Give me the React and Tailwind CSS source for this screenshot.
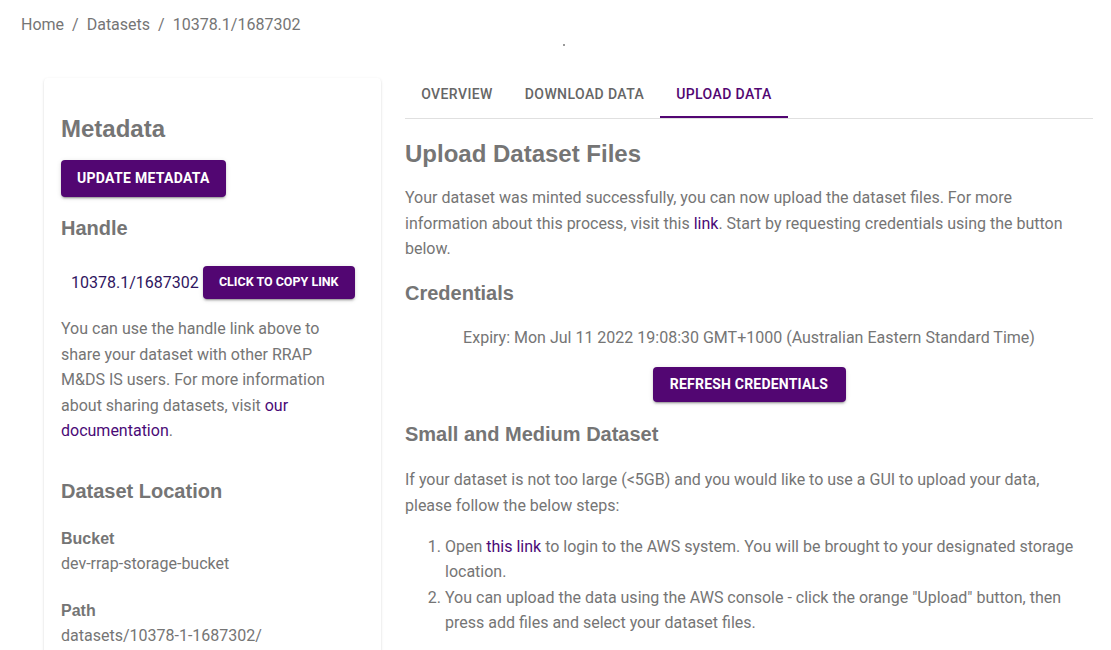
import React from "react";

const btnShadow =
  "shadow-[0_3px_1px_-2px_rgba(0,0,0,0.2),0_2px_2px_0_rgba(0,0,0,0.14),0_1px_5px_0_rgba(0,0,0,0.12)]";

function Tabs() {
  return (
    <div className="flex h-[49px] border-b border-[#e0e0e0] font-['Roboto',sans-serif] text-[14px] font-medium uppercase tracking-[0.4px]">
      <div className="flex h-[48px] w-[104px] items-center justify-center text-[#666666]">Overview</div>
      <div className="flex h-[48px] w-[151px] items-center justify-center text-[#666666]">Download Data</div>
      <div className="flex h-[48px] w-[128px] items-center justify-center border-b-2 border-[#520672] pt-[2px] text-[#520672]">
        Upload Data
      </div>
    </div>
  );
}

function MetadataCard() {
  return (
    <div className="mt-[8px] w-[337px] shrink-0 rounded-[4px] bg-white px-[17px] pt-[36px] pb-[40px] shadow-[0_2px_1px_-1px_rgba(0,0,0,0.2),0_1px_1px_0_rgba(0,0,0,0.14),0_1px_3px_0_rgba(0,0,0,0.12)]">
      <h2 className="font-['Liberation_Sans',Arial,sans-serif] text-[24px] leading-[29px] font-bold text-[#757575]">Metadata</h2>
      <button
        className={`mt-[17px] h-[37px] rounded-[4px] bg-[#520672] px-[16px] font-['Roboto',sans-serif] text-[14px] font-bold uppercase tracking-[0.3px] text-white ${btnShadow}`}
      >
        Update Metadata
      </button>
      <h3 className="mt-[19px] font-['Liberation_Sans',Arial,sans-serif] text-[20px] leading-[24px] font-bold text-[#757575]">Handle</h3>
      <div className="mt-[26px] flex items-center gap-[4px] pl-[10px]">
        <span className="font-['Roboto',sans-serif] text-[16px] text-[#2f1660]">10378.1/1687302</span>
        <button
          className={`h-[33px] w-[152px] rounded-[4px] bg-[#520672] font-['Roboto',sans-serif] text-[12.5px] font-bold uppercase text-white ${btnShadow}`}
        >
          Click to copy link
        </button>
      </div>
      <p className="mt-[17px] pr-[8px] font-['Roboto',sans-serif] text-[16px] leading-[25.6px] text-[#757575]">
        You can use the handle link above to share your dataset with other RRAP M&amp;DS IS users. For more information about
        sharing datasets, visit <span className="text-[#4a0a77]">our documentation</span>.
      </p>
      <h3 className="mt-[35px] font-['Liberation_Sans',Arial,sans-serif] text-[20px] leading-[24px] font-bold text-[#757575]">
        Dataset Location
      </h3>
      <div className="mt-[24px] font-['Liberation_Sans',Arial,sans-serif] text-[16px] leading-[24px] font-bold text-[#757575]">Bucket</div>
      <div className="font-['Roboto',sans-serif] text-[16px] leading-[25.6px] text-[#757575]">dev-rrap-storage-bucket</div>
      <div className="mt-[22px] font-['Liberation_Sans',Arial,sans-serif] text-[16px] leading-[24px] font-bold text-[#757575]">Path</div>
      <div className="font-['Roboto',sans-serif] text-[16px] leading-[25.6px] text-[#757575]">datasets/10378-1-1687302/</div>
    </div>
  );
}

function UploadPanel() {
  return (
    <div className="w-[688px] shrink-0">
      <Tabs />
      <h2 className="mt-[20px] font-['Liberation_Sans',Arial,sans-serif] text-[24px] leading-[29px] font-bold text-[#757575]">
        Upload Dataset Files
      </h2>
      <p className="mt-[17px] pr-[22px] font-['Roboto',sans-serif] text-[16px] leading-[25.6px] text-[#757575]">
        Your dataset was minted successfully, you can now upload the dataset files. For more information about this process, visit
        this <span className="text-[#4a0a77]">link</span>. Start by requesting credentials using the button below.
      </p>
      <h3 className="mt-[19px] font-['Liberation_Sans',Arial,sans-serif] text-[20px] leading-[24px] font-bold text-[#757575]">Credentials</h3>
      <p className="mt-[20px] text-center font-['Roboto',sans-serif] text-[16px] leading-[25.6px] text-[#757575]">
        Expiry: Mon Jul 11 2022 19:08:30 GMT+1000 (Australian Eastern Standard Time)
      </p>
      <div className="mt-[17px] flex justify-center">
        <button
          className={`h-[35px] w-[193px] rounded-[4px] bg-[#520672] font-['Roboto',sans-serif] text-[14px] font-bold uppercase tracking-[0.2px] text-white ${btnShadow}`}
        >
          Refresh Credentials
        </button>
      </div>
      <h3 className="mt-[20px] font-['Liberation_Sans',Arial,sans-serif] text-[20px] leading-[24px] font-bold text-[#757575]">
        Small and Medium Dataset
      </h3>
      <p className="mt-[21px] pr-[22px] font-['Roboto',sans-serif] text-[16px] leading-[25.6px] text-[#757575]">
        If your dataset is not too large (&lt;5GB) and you would like to use a GUI to upload your data, please follow the below steps:
      </p>
      <ol className="mt-[15px] list-decimal pl-[40px] font-['Roboto',sans-serif] text-[16px] leading-[25.6px] text-[#757575]">
        <li>
          Open <span className="text-[#4a0a77]">this link</span> to login to the AWS system. You will be brought to your designated
          storage location.
        </li>
        <li>
          You can upload the data using the AWS console - click the orange "Upload" button, then press add files and select your
          dataset files.
        </li>
      </ol>
    </div>
  );
}

export default function App() {
  return (
    <div className="min-h-[650px] bg-white font-['Roboto',sans-serif]">
      <nav className="flex gap-[8px] pt-[13px] pl-[21px] text-[16px] leading-[24px] text-[#757575]">
        <span>Home</span>
        <span>/</span>
        <span>Datasets</span>
        <span>/</span>
        <span>10378.1/1687302</span>
      </nav>
      <div className="mt-[7px] ml-[563px] h-[2px] w-[2px] bg-[#9a9a9a]" />
      <div className="mt-[24px] flex items-start gap-[24px] pl-[44px]">
        <MetadataCard />
        <UploadPanel />
      </div>
    </div>
  );
}
